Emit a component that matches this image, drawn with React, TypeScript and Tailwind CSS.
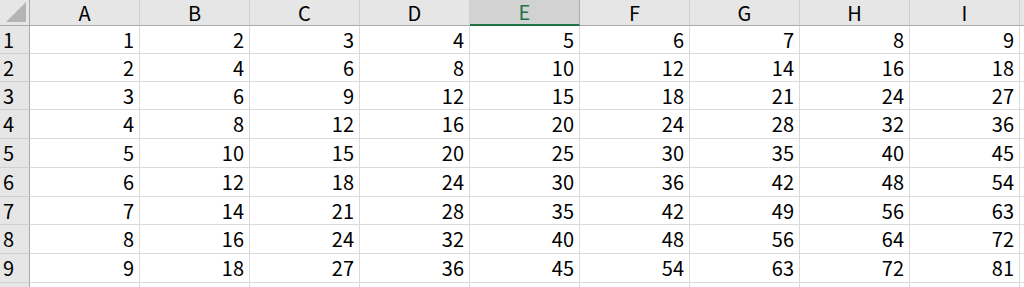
import React from "react";

const cols = ["A", "B", "C", "D", "E", "F", "G", "H", "I"];
const rowHeights = [28, 28, 28, 29, 29, 29, 28, 29, 29];

export default function App() {
  return (
    <div
      className="w-[1024px] h-[287px] overflow-hidden bg-white text-black"
      style={{ fontFamily: '"Noto Sans CJK JP", "Noto Sans", sans-serif' }}
    >
      {/* header row */}
      <div className="flex h-[26px]">
        <div className="relative w-[30px] shrink-0 bg-[#e6e6e6] border-r border-b border-[#ababab]">
          <svg className="absolute right-[3px] bottom-[3px]" width="20" height="20" viewBox="0 0 20 20">
            <polygon points="20,0 20,20 0,20" fill="#b4b4b4" />
          </svg>
        </div>
        {cols.map((c) =>
          c === "E" ? (
            <div
              key={c}
              className="w-[110px] shrink-0 flex items-center justify-center bg-[#d2d2d2] border-r border-[#ababab] border-b-2 border-b-[#217346] text-[#217346] text-[20px] leading-[24px]"
            >
              {c}
            </div>
          ) : (
            <div
              key={c}
              className="w-[110px] shrink-0 flex items-center justify-center bg-[#e6e6e6] border-r border-b border-r-[#d0d0d0] border-b-[#ababab] text-[20px] leading-[25px]"
            >
              {c}
            </div>
          )
        )}
        <div className="flex-1 bg-[#e6e6e6] border-b border-[#ababab]" />
      </div>
      {rowHeights.map((h, i) => {
        const r = i + 1;
        return (
          <div key={r} className="flex" style={{ height: h }}>
            <div className="w-[30px] shrink-0 flex items-center pl-[3px] bg-[#e6e6e6] border-r border-b border-r-[#ababab] border-b-[#d0d0d0] text-[20px] leading-[26px]">
              {r}
            </div>
            {cols.map((c, j) => (
              <div
                key={c}
                className="w-[110px] shrink-0 flex items-center justify-end pr-[5px] border-r border-b border-[#dadada] text-[20px] leading-[26px]"
              >
                {r * (j + 1)}
              </div>
            ))}
            <div className="flex-1 border-b border-[#dadada]" />
          </div>
        );
      })}
      <div className="flex h-[10px]">
        <div className="w-[30px] shrink-0 bg-[#e6e6e6] border-r border-[#ababab]" />
        {cols.map((c) => (
          <div key={c} className="w-[110px] shrink-0 border-r border-[#dadada]" />
        ))}
      </div>
    </div>
  );
}
